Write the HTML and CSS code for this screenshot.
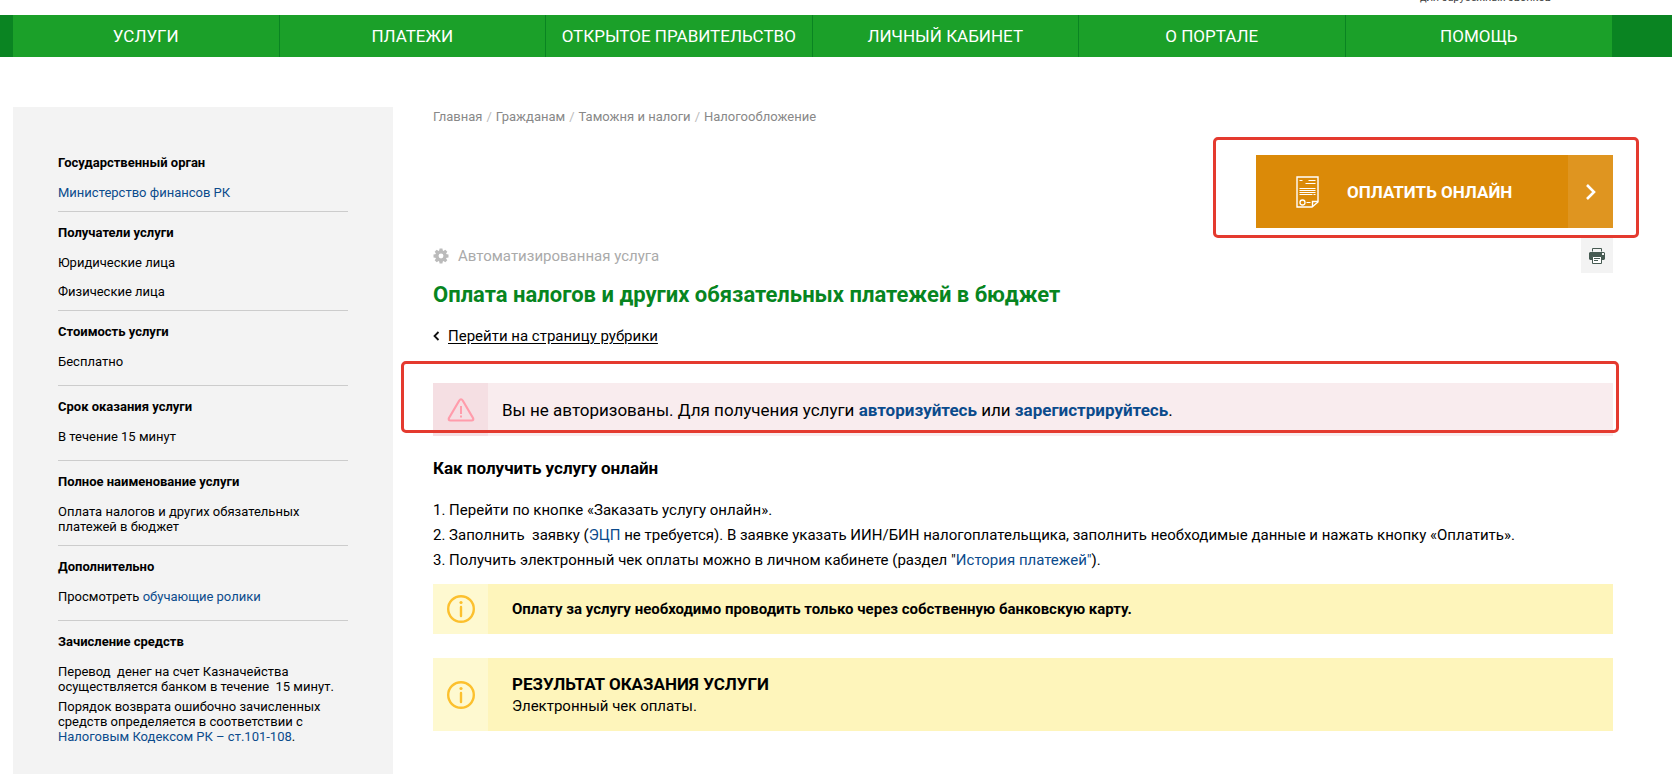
FILE: index.html
```
<!DOCTYPE html>
<html lang="ru">
<head>
<meta charset="utf-8">
<title>Оплата налогов и других обязательных платежей в бюджет</title>
<link rel="stylesheet" href="styles.css">
</head>
<body>
<header class="topbar"><p class="topbar-note">для зарубежных звонков</p></header>
<nav class="nav">
  <ul class="nav-list">
    <li><a href="#">УСЛУГИ</a></li>
    <li><a href="#">ПЛАТЕЖИ</a></li>
    <li><a href="#">ОТКРЫТОЕ ПРАВИТЕЛЬСТВО</a></li>
    <li><a href="#">ЛИЧНЫЙ КАБИНЕТ</a></li>
    <li><a href="#">О ПОРТАЛЕ</a></li>
    <li><a href="#">ПОМОЩЬ</a></li>
  </ul>
</nav>
<div class="page">
  <aside class="sidebar">
    <section>
      <h3>Государственный орган</h3>
      <a href="#">Министерство финансов РК</a>
    </section>
    <section>
      <h3>Получатели услуги</h3>
      <ul class="recipients">
        <li>Юридические лица</li>
        <li>Физические лица</li>
      </ul>
    </section>
    <section>
      <h3>Стоимость услуги</h3>
      <p>Бесплатно</p>
    </section>
    <section>
      <h3>Срок оказания услуги</h3>
      <p>В течение 15 минут</p>
    </section>
    <section>
      <h3>Полное наименование услуги</h3>
      Оплата налогов и других обязательных<br>платежей в бюджет
    </section>
    <section>
      <h3>Дополнительно</h3>
      <p>Просмотреть <a href="#">обучающие ролики</a></p>
    </section>
    <section>
      <h3>Зачисление средств</h3>
      <p>Перевод&nbsp; денег на счет Казначейства<br>осуществляется банком в течение&nbsp; 15 минут.</p>
      <p>Порядок возврата ошибочно зачисленных<br>средств определяется в соответствии с<br><a href="#">Налоговым Кодексом РК – ст.101-108</a>.</p>
    </section>
  </aside>
  <main class="main">
    <ol class="crumbs">
      <li><a href="#">Главная</a></li>
      <li><a href="#">Гражданам</a></li>
      <li><a href="#">Таможня и налоги</a></li>
      <li><a href="#">Налогообложение</a></li>
    </ol>
    <div class="pay-wrap">
      <button class="pay" type="button">
        <span class="pay-body">
          <svg class="pay-icon" width="24" height="32" viewBox="0 0 24 32" fill="none" stroke="#fff">
            <path d="M1 1h21v25l-6 5H1z" stroke-width="1.4"/>
            <path d="M16.500 31v-5.500h5.500" stroke-width="1.400"/>
            <path d="M3.500 4.500h3M12.500 4.500h7M9.500 7.500h10M3.500 12.500h16M3.500 14.500h16M3.500 16.500h16M3.500 18.500h13M17.500 18.500h2M10.500 26.500h4" stroke-width="1.100"/>
            <circle cx="6.500" cy="26.500" r="2.500" stroke-width="1.300"/>
          </svg>
          <span>ОПЛАТИТЬ ОНЛАЙН</span>
        </span>
        <span class="pay-arrow">
          <svg width="12" height="18" viewBox="0 0 12 18" fill="none" stroke="#fff" stroke-width="2.600"><path d="M2 2l7 7-7 7"/></svg>
        </span>
      </button>
      <span class="mark mark-pay"></span>
    </div>
    <div class="tools">
      <p class="auto">
        <svg width="16" height="16" viewBox="0 0 16 16">
          <g fill="#bbb"><circle cx="8" cy="8" r="5.700"/>
          <path id="tooth" d="M6.600 0.500h2.800l.6 3H6z"/>
          <use href="#tooth" transform="rotate(45 8 8)"/><use href="#tooth" transform="rotate(90 8 8)"/><use href="#tooth" transform="rotate(135 8 8)"/><use href="#tooth" transform="rotate(180 8 8)"/><use href="#tooth" transform="rotate(225 8 8)"/><use href="#tooth" transform="rotate(270 8 8)"/><use href="#tooth" transform="rotate(315 8 8)"/></g>
          <circle cx="8" cy="8" r="2.400" fill="#fff"/>
        </svg>
        Автоматизированная услуга
      </p>
      <button class="print" type="button" aria-label="Печать">
        <svg width="16" height="16" viewBox="0 0 16 16">
          <path d="M3.500 3.500V.5h9v3" fill="none" stroke="#465a52"/>
          <path d="M1 4h14l1 1v6l-1 1H1l-1-1V5z" fill="#465a52"/>
          <path d="M13 5h2v2h-2z" fill="#f3f3f3"/>
          <path d="M3.500 8.500h9v7h-9z" fill="#fff" stroke="#465a52"/>
          <path d="M5 10.500h6M5 12.500h4" stroke="#465a52"/>
        </svg>
      </button>
    </div>
    <h1>Оплата налогов и других обязательных платежей в бюджет</h1>
    <p class="back">
      <svg width="7" height="10" viewBox="0 0 7 10" fill="none" stroke="#111" stroke-width="1.800"><path d="M5.500 1l-4 4 4 4"/></svg>
      <a href="#">Перейти на страницу рубрики</a>
    </p>
    <div class="notice notice-alert">
      <span class="notice-icon">
        <svg width="28" height="24" viewBox="0 0 28 24" fill="none" stroke="#ff9cab">
          <path d="M12.300 2.500L2 20q-1 2.500 1.500 2.500h21q2.500 0 1.500-2.500L15.700 2.500q-1.700-2.500-3.400 0z" stroke-width="2.200" stroke-linejoin="round"/>
          <path d="M14 8v8M14 17.500v2" stroke-width="2"/>
        </svg>
      </span>
      <p class="notice-text">Вы не авторизованы. Для получения услуги <a href="#">авторизуйтесь</a> или <a href="#">зарегистрируйтесь</a>.</p>
      <span class="mark mark-alert"></span>
    </div>
    <h2>Как получить услугу онлайн</h2>
    <div class="steps">
      <p>1. Перейти по кнопке «Заказать услугу онлайн».</p>
      <p>2. Заполнить&nbsp; заявку (<a href="#">ЭЦП</a> не требуется). В заявке указать ИИН/БИН налогоплательщика, заполнить необходимые данные и нажать кнопку «Оплатить».</p>
      <p>3. Получить электронный чек оплаты можно в личном кабинете (раздел "<a href="#">История платежей"</a>).</p>
    </div>
    <div class="notice notice-info">
      <span class="notice-icon">
        <svg width="28" height="28" viewBox="0 0 28 28" fill="none" stroke="#fcc02e" stroke-width="2.400"><circle cx="14" cy="14" r="12.800"/><path d="M14 12v9" stroke-linecap="round"/><circle cx="14" cy="7.500" r="1.600" fill="#fcc02e" stroke="none"/></svg>
      </span>
      <p class="notice-strong">Оплату за услугу необходимо проводить только через собственную банковскую карту.</p>
    </div>
    <div class="notice notice-info notice-result">
      <span class="notice-icon">
        <svg width="28" height="28" viewBox="0 0 28 28" fill="none" stroke="#fcc02e" stroke-width="2.400"><circle cx="14" cy="14" r="12.800"/><path d="M14 12v9" stroke-linecap="round"/><circle cx="14" cy="7.500" r="1.600" fill="#fcc02e" stroke="none"/></svg>
      </span>
      <div class="result">
        <h2>РЕЗУЛЬТАТ ОКАЗАНИЯ УСЛУГИ</h2>
        <p>Электронный чек оплаты.</p>
      </div>
    </div>
  </main>
</div>
</body>
</html>
```

FILE: styles.css
```
* { box-sizing: border-box; }
body, h1, h2, h3, p, ul, ol { margin: 0; padding: 0; }
ul, ol { list-style: none; }
svg { display: block; flex: none; }
body {
  min-height: 100vh;
  display: flex;
  flex-direction: column;
  background: #fff;
  color: #000;
  font-family: Roboto, "Noto Sans", sans-serif;
  font-size: 15px;
}
a { color: #0b4b8c; text-decoration: none; }
button { border: 0; padding: 0; font: inherit; cursor: pointer; }

.topbar {
  height: 15px;
  flex: none;
  display: flex;
  justify-content: flex-end;
  align-items: flex-start;
  padding-right: 121px;
  overflow: hidden;
}
.topbar-note { margin-top: -9px; font-size: 11px; line-height: 14px; color: #444; }

.nav { flex: none; padding: 0 60px 0 13px; background: #0a8422; }
.nav-list { display: grid; grid-template-columns: repeat(6, 1fr); background: #1ba029; }
.nav-list li:not(:last-child) { border-right: 1px solid #0a8422; }
.nav-list a {
  display: block;
  padding-top: 1px;
  font-size: 17px;
  line-height: 41px;
  text-align: center;
  white-space: nowrap;
  color: #fff;
}

.page {
  flex: 1;
  display: grid;
  grid-template-columns: 380px minmax(0, 1fr);
  gap: 40px;
  padding: 50px 59px 0 13px;
}
.sidebar {
  padding: 48px 45px 0;
  background: #f3f3f3;
  font-size: 13px;
  line-height: 15px;
  white-space: nowrap;
}
.sidebar section { padding-bottom: 11px; }
.sidebar section + section { padding-top: 13px; border-top: 1px solid #ccc; }
.sidebar h3 { margin-bottom: 15px; font-size: 13px; line-height: 15px; }
.sidebar p { margin-bottom: 5px; }
.recipients { display: grid; gap: 14px; }

.crumbs { display: flex; padding-top: 1px; font-size: 13px; line-height: 18px; color: #bbb; }
.crumbs a { color: #888; }
.crumbs li + li::before { content: "/"; padding: 0 4px; }

.pay-wrap { position: relative; width: 357px; margin: 29px 0 0 auto; }
.pay {
  width: 100%;
  height: 73px;
  display: flex;
  background: #db8a08;
  color: #fff;
  font-size: 17px;
  font-weight: 700;
}
.pay-body { flex: 1; display: flex; align-items: center; gap: 27px; padding-left: 40px; }
.pay-arrow { width: 45px; display: grid; place-items: center; background: #df9520; }
.mark { position: absolute; border: 3px solid #e43a2f; border-radius: 5px; pointer-events: none; }
.mark-pay { inset: -18px -26px -10px -43px; }

.tools { display: flex; justify-content: space-between; padding-top: 10px; }
.auto { display: flex; align-items: center; gap: 9px; color: #aaa; }
.print { width: 32px; height: 35px; display: grid; place-items: center; background: #f3f3f3; }

h1 { margin-top: 6px; font-size: 22px; line-height: 32px; color: #07851f; }
.back { display: flex; align-items: center; gap: 8px; margin-top: 15px; line-height: 20px; }
.back a { color: #000; text-decoration: underline; text-underline-offset: 2px; }

.notice { position: relative; display: flex; align-items: stretch; }
.notice-icon { width: 55px; flex: none; display: grid; place-items: center; }
.notice-alert { min-height: 53px; margin-top: 37px; background: #f9ecee; }
.notice-alert .notice-icon { background: #f5dfe3; }
.notice-text { align-self: center; padding-left: 14px; font-size: 17px; }
.notice-text a { font-weight: 700; }
.mark-alert { inset: -22px -6px 3px -32px; }

h2 { font-size: 17px; line-height: 24px; }
.main > h2 { margin-top: 20px; }
.steps { margin-top: 18px; line-height: 25px; }
.notice-info { min-height: 50px; margin-top: 11px; background: #fef5bb; }
.notice-info .notice-icon { background: #fef9d0; }
.notice-strong { align-self: center; padding-left: 24px; font-weight: 700; }
.notice-result { min-height: 73px; margin-top: 24px; }
.result { align-self: center; padding-left: 24px; line-height: 22px; }
.result h2 { line-height: 22px; }
```
